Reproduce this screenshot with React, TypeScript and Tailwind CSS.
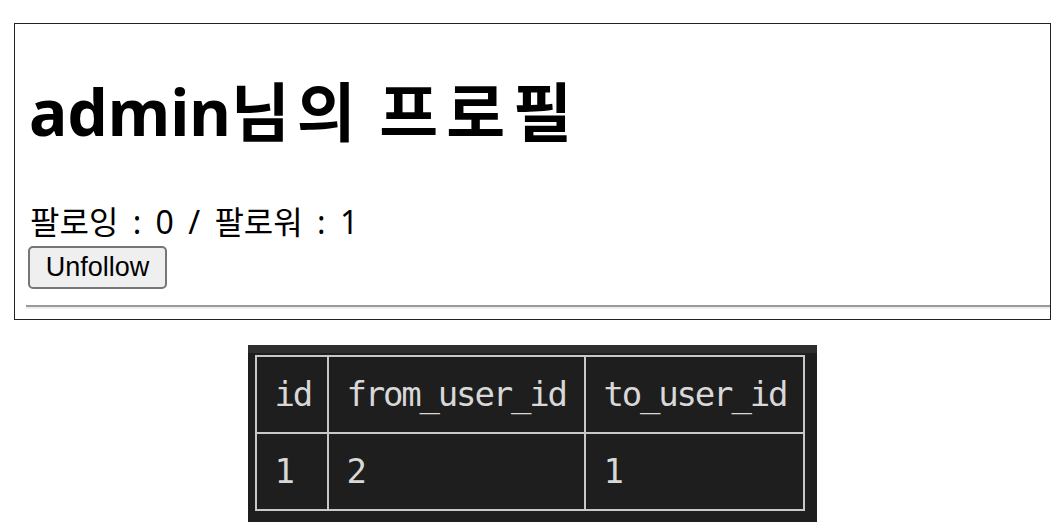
export default function App() {
  const rows = [{ id: '1', from: '2', to: '1' }]

  return (
    <div className="min-h-screen bg-white pt-[23px] text-black">
      {/* 프로필 박스 */}
      <div className="ml-[14px] w-[1037px] h-[297px] border border-[#222] pl-[14px] flex flex-col font-['Noto_Sans','Noto_Sans_CJK_KR',sans-serif]">
        <h1 className="mt-[50px] text-[64px] leading-[76px] font-bold">
          admin<span className="tracking-[7px]">님의</span> <span className="tracking-[8px]">프로필</span>
        </h1>
        <p className="mt-[52px] ml-[1px] text-[32px] leading-[40px] [word-spacing:6px]">팔로잉 : 0 / 팔로워 : 1</p>
        <button className="self-start -ml-[1px] mt-[4px] h-[43px] w-[139px] border-2 border-[#767676] rounded-[5px] bg-[#efefef] text-[27px] leading-none font-['Liberation_Sans',Arial,sans-serif]">
          Unfollow
        </button>
        <div className="mt-[16px] -ml-[3px] h-[4px] border-t-2 border-[#9a9a9a] bg-[#eeeeee]" />
      </div>

      {/* DB 테이블 캡처 */}
      <div className="mx-auto mt-[25px] w-[569px] bg-[#1e1e1e] border-t-[8px] border-[#2e2e2e] pt-[2px] pl-[7px] pr-[11px] pb-[11px]">
        <table className="w-[550px] table-fixed border-collapse text-[#d8d8d8] font-['DejaVu_Sans_Mono',monospace] text-[34px] tracking-[-2.2px]">
          <thead>
            <tr className="h-[77px]">
              <th className="w-[72px] border-2 border-[#c8c8c8] pl-[18px] pr-0 text-left font-normal">id</th>
              <th className="w-[257px] border-2 border-[#c8c8c8] pl-[18px] pr-0 text-left font-normal">from_user_id</th>
              <th className="border-2 border-[#c8c8c8] pl-[18px] pr-0 text-left font-normal">to_user_id</th>
            </tr>
          </thead>
          <tbody>
            {rows.map(r => (
              <tr key={r.id} className="h-[77px]">
                <td className="border-2 border-[#c8c8c8] pl-[18px]">{r.id}</td>
                <td className="border-2 border-[#c8c8c8] pl-[18px]">{r.from}</td>
                <td className="border-2 border-[#c8c8c8] pl-[18px]">{r.to}</td>
              </tr>
            ))}
          </tbody>
        </table>
      </div>
    </div>
  )
}
